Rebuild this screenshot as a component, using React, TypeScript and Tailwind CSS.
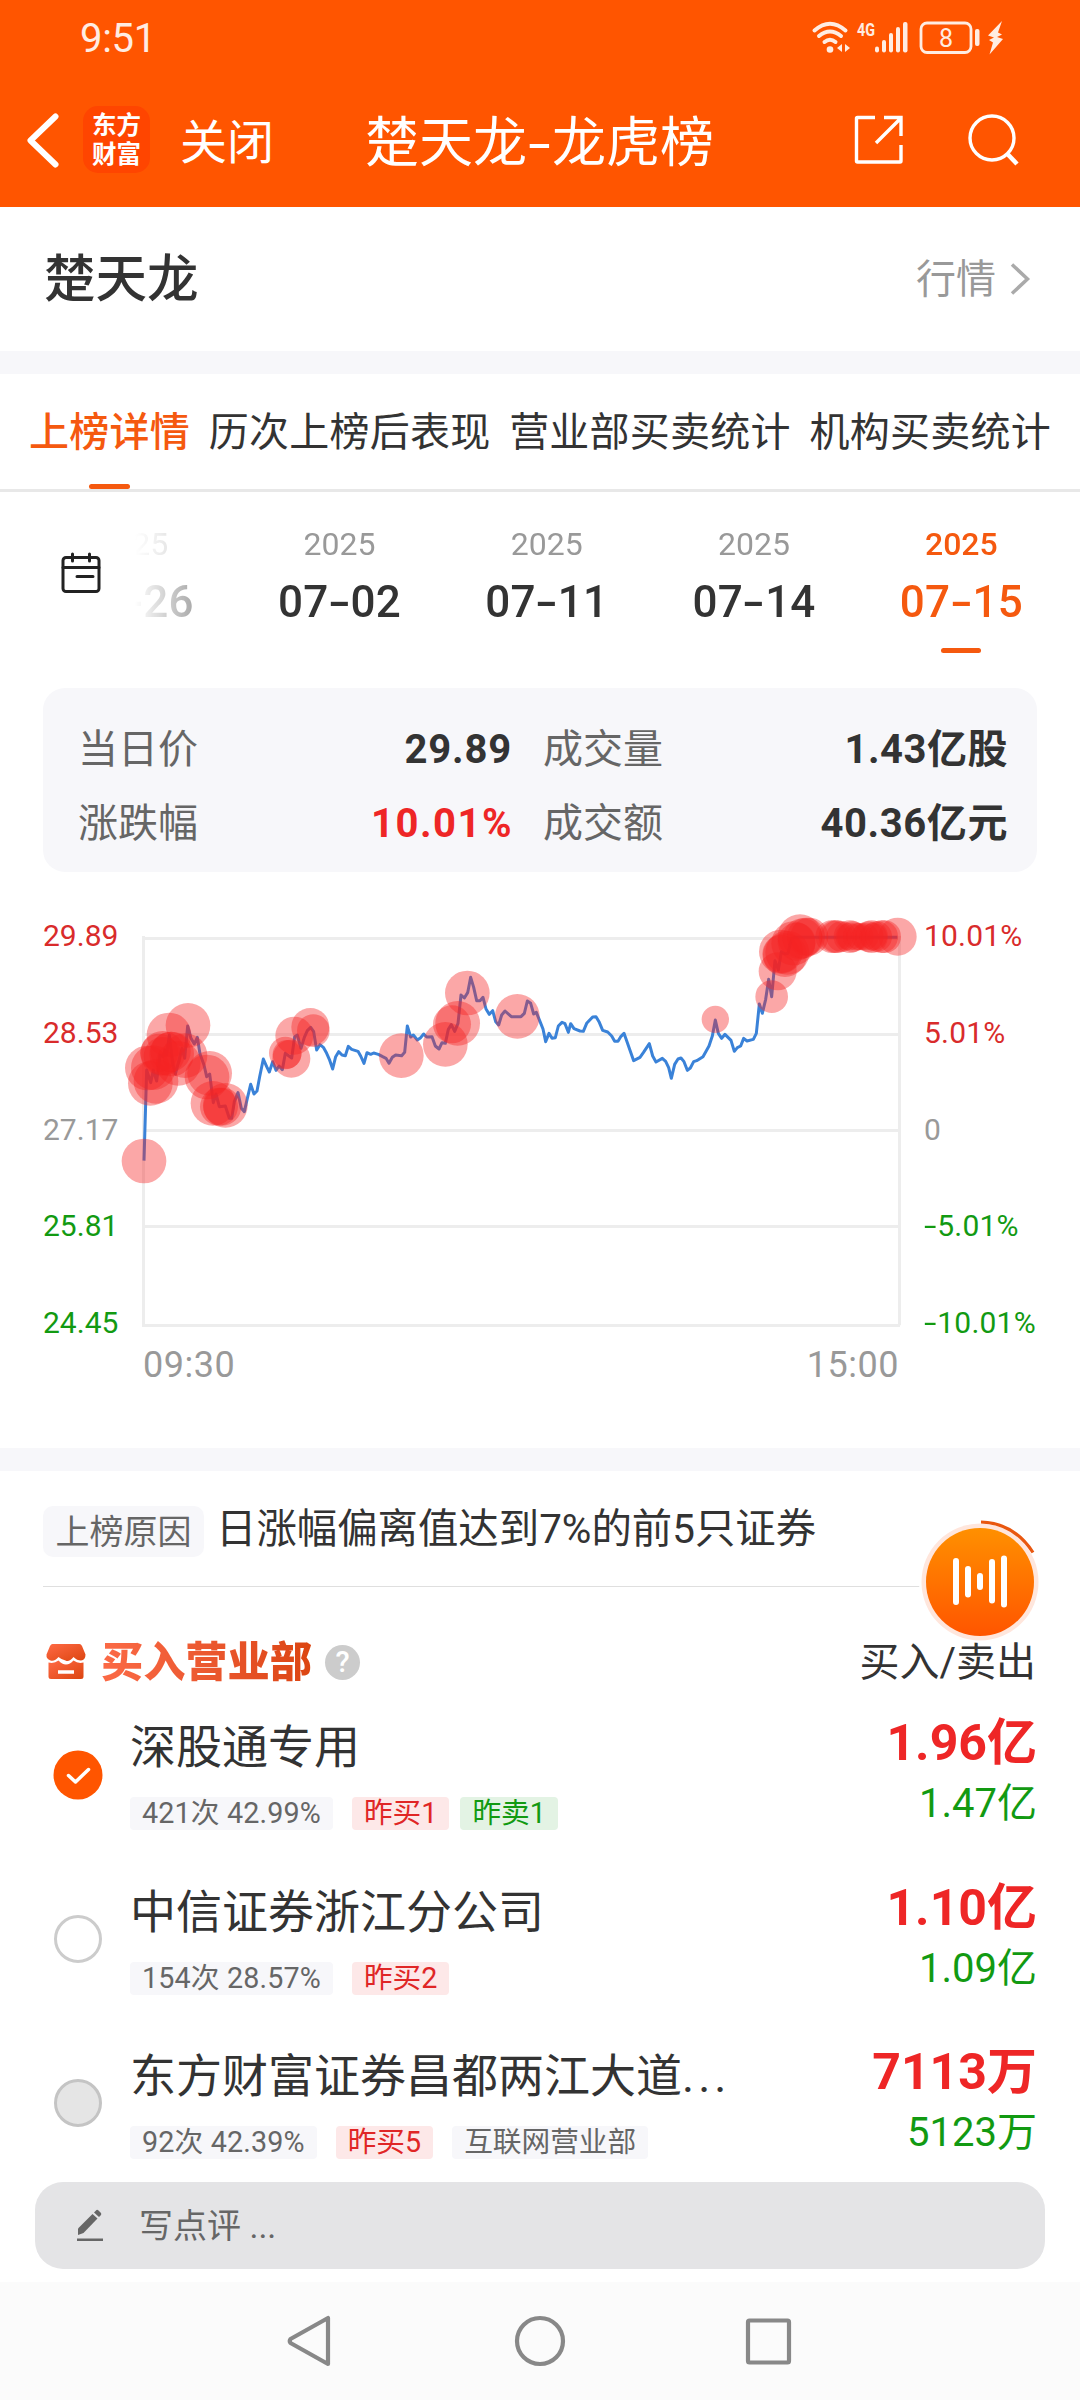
import React from "react";

interface Tag {
    text: string;
    tone: "gray" | "red" | "green";
}

interface Seat {
    name: string;
    more?: boolean;
    state: "checked" | "empty" | "disabled";
    buy: string;
    sell: string;
    tags: Tag[];
}

const tabs = ["上榜详情", "历次上榜后表现", "营业部买卖统计", "机构买卖统计"];

const dates = [
    { year: "2025", day: "07-02" },
    { year: "2025", day: "07-11" },
    { year: "2025", day: "07-14" },
    { year: "2025", day: "07-15", active: true },
];

const priceTicks = [
    { price: "29.89", rate: "10.01%", color: "text-[#d92b2b]" },
    { price: "28.53", rate: "5.01%", color: "text-[#d92b2b]" },
    { price: "27.17", rate: "0", color: "text-[#999999]" },
    { price: "25.81", rate: "-5.01%", color: "text-[#129a12]" },
    { price: "24.45", rate: "-10.01%", color: "text-[#129a12]" },
];

const seats: Seat[] = [
    {
        name: "深股通专用",
        state: "checked",
        buy: "1.96亿",
        sell: "1.47亿",
        tags: [
            { text: "421次 42.99%", tone: "gray" },
            { text: "昨买1", tone: "red" },
            { text: "昨卖1", tone: "green" },
        ],
    },
    {
        name: "中信证券浙江分公司",
        state: "empty",
        buy: "1.10亿",
        sell: "1.09亿",
        tags: [
            { text: "154次 28.57%", tone: "gray" },
            { text: "昨买2", tone: "red" },
        ],
    },
    {
        name: "东方财富证券昌都两江大道",
        more: true,
        state: "disabled",
        buy: "7113万",
        sell: "5123万",
        tags: [
            { text: "92次 42.39%", tone: "gray" },
            { text: "昨买5", tone: "red" },
            { text: "互联网营业部", tone: "gray" },
        ],
    },
];

const toneClass = {
    gray: "bg-[#f7f7fa] text-[#666666]",
    red: "bg-[#fde8e8] text-[#e02626]",
    green: "bg-[#e3f3e4] text-[#129a12]",
};

// Intraday price, three units per pixel
const pricePoints =
    "102,782 110,510 122,548 130,510 140,543 150,465 160,470 165,450 170,465 178,405 188,490 196,522 206,485 216,445 224,475 233,378 243,415 253,432 262,412 270,462 282,495 290,530 299,522 310,608 318,582 328,620 346,618 358,655 365,655 373,605 384,578 394,625 403,635 412,595 422,553 432,582 441,573 449,530 460,477 470,500 478,516 488,485 498,511 507,498 517,509 526,460 545,474 554,410 562,405 573,445 583,412 592,392 602,382 611,395 620,450 630,434 640,442 650,460 658,478 668,507 677,470 686,455 696,465 706,467 715,439 725,448 744,454 752,468 762,490 771,458 782,463 791,459 805,463 818,470 828,475 837,490 847,472 857,465 875,467 884,457 892,378 902,411 910,405 922,420 932,413 941,402 950,411 966,410 976,438 987,447 996,428 1006,430 1015,388 1024,374 1034,394 1044,370 1053,285 1063,294 1073,278 1082,232 1091,262 1100,302 1110,302 1119,292 1128,327 1138,343 1148,332 1157,365 1166,375 1175,345 1185,333 1204,350 1233,350 1243,340 1252,303 1262,310 1271,342 1279,337 1289,362 1299,387 1307,425 1317,400 1326,415 1336,413 1345,378 1356,367 1365,371 1375,397 1382,371 1392,386 1410,393 1420,394 1430,370 1448,351 1458,350 1467,365 1478,391 1493,396 1505,408 1514,424 1524,424 1533,409 1542,400 1551,425 1571,482 1590,472 1600,458 1618,431 1628,468 1638,486 1657,475 1667,484 1676,503 1684,535 1694,493 1704,477 1713,474 1722,485 1732,511 1741,504 1751,485 1760,482 1779,470 1797,438 1807,408 1816,360 1825,400 1835,415 1845,403 1863,421 1873,454 1882,443 1892,438 1901,415 1911,423 1930,418 1939,400 1948,312 1957,340 1967,298 1976,238 1985,290 1995,182 2005,210 2014,155 2024,162 2034,160 2045,115 2055,112 2362,112";

// [cx, cy, r]
const tradeDots = [
    [102, 783, 67], [112, 504, 67], [121, 550, 67], [138, 544, 67], [130, 503, 67],
    [177, 405, 67], [234, 376, 67], [158, 460, 67], [158, 468, 57], [185, 462, 67],
    [148, 458, 57], [205, 490, 67], [225, 467, 67], [182, 455, 60],
    [299, 520, 67], [291, 531, 67], [309, 610, 67], [327, 620, 57], [337, 620, 57], [346, 616, 67],
    [553, 407, 57], [601, 381, 57], [610, 392, 49], [526, 459, 49], [544, 476, 57], [531, 463, 43],
    [874, 467, 67], [1006, 433, 67], [1026, 373, 57], [1043, 370, 67], [1072, 279, 67], [1222, 349, 67],
    [1816, 358, 41], [1985, 290, 49], [2003, 214, 57], [2013, 155, 66], [2014, 162, 57],
    [2025, 165, 66], [2032, 158, 66], [2050, 130, 66], [2060, 125, 57], [2070, 110, 67],
    [2078, 115, 60], [2088, 110, 57], [2098, 110, 57], [2165, 110, 49], [2175, 110, 49],
    [2182, 110, 49], [2195, 110, 46], [2220, 110, 49], [2218, 110, 41], [2228, 110, 46],
    [2240, 110, 41], [2250, 110, 41], [2265, 110, 41], [2275, 110, 46],
    [2285, 110, 49], [2290, 110, 41], [2300, 110, 46], [2315, 110, 49], [2324, 110, 49], [2363, 110, 57],
];

// Number text whose minus sign or dash is drawn wider than the font's hyphen
function Dashed({ text }: { text: string }) {
    const parts = text.split("-");
    return (
        <>
            {parts.map((part, i) => (
                <React.Fragment key={i}>
                    {i > 0 && <span className="mx-[0.08em] inline-block scale-x-150">-</span>}
                    {part}
                </React.Fragment>
            ))}
        </>
    );
}

function StatusBar() {
    return (
        <div className="flex h-[76px] items-center justify-between pl-[80px] pr-[76px] text-[#ffece2]">
            <span className="mt-[1px] text-[40px] leading-none tracking-[-0.3px]">9:51</span>
            <svg className="overflow-visible" width="192" height="34" viewBox="812 20 192 34" fill="currentColor">
                <g fill="none" stroke="currentColor" strokeWidth="4" strokeLinecap="round">
                    <path d="M814.500 29.500Q830 16 845.500 29.500" />
                    <path d="M819 35Q830 26 841 35" />
                    <path d="M824.500 41Q830 36.500 835.500 41" />
                </g>
                <circle cx="830" cy="48.500" r="3.300" />
                <path d="M842 43v8l-5-4zM845 43v8l5-4z" />
                <text x="857" y="35" fontSize="19" fontWeight="700" textLength="18" lengthAdjust="spacingAndGlyphs">4G</text>
                <rect x="875" y="45.500" width="4" height="6" rx="2" />
                <rect x="882" y="39" width="4" height="12.500" rx="2" />
                <rect x="889" y="32" width="4" height="19.500" rx="2" />
                <rect x="896" y="26" width="4" height="25.500" rx="2" />
                <rect x="903" y="21" width="4.500" height="30.500" rx="2" />
                <rect x="921" y="22" width="50" height="29.500" rx="6" fill="none" stroke="currentColor" strokeWidth="2.800" />
                <text x="946" y="45.500" fontSize="25" textAnchor="middle">8</text>
                <rect x="975" y="28" width="4.500" height="17" rx="2" />
                <path d="M1002 20l-14 14.500 6 2-5 2.500 4 2.500-3.500 12L1003 38l-6-2 5-2.500-4-2z" />
            </svg>
        </div>
    );
}

function NavBar() {
    return (
        <div className="flex h-[131px] items-center pb-[4px] pl-[26px] pr-[61px] text-white">
            <svg width="34" height="56" viewBox="0 0 34 56" fill="none" stroke="currentColor" strokeWidth="6" strokeLinecap="round" strokeLinejoin="round">
                <path d="M29.500 4.500L4.500 28.500 29.500 52.500" />
            </svg>
            <div className="ml-[23px] flex h-[67px] w-[67px] flex-col items-center justify-center rounded-[15px] bg-[#ff4500] text-[24.5px] font-bold leading-[29px]">
                <span>东方</span>
                <span>财富</span>
            </div>
            <span className="ml-[30px] mt-[5px] text-[47px] leading-none">关闭</span>
            <span className="ml-[91px] mt-[8px] flex text-[54px] leading-none">
                <span>楚天龙</span>
                <span className="w-[25px] scale-x-150 text-center">-</span>
                <span>龙虎榜</span>
            </span>
            <svg className="ml-auto" width="50" height="50" viewBox="0 0 50 50" fill="none" stroke="currentColor" strokeWidth="3.400">
                <path d="M21 2.500H3.500Q2.500 2.500 2.500 3.500V46Q2.500 47 3.500 47H46Q47 47 47 46V30" />
                <path d="M30 2.500H47V21M47 3L22 28" />
            </svg>
            <svg className="ml-[63px]" width="52" height="54" viewBox="0 0 52 54" fill="none" stroke="currentColor" strokeWidth="3.400">
                <circle cx="25" cy="25" r="22" />
                <path d="M40 40.500L50 51" strokeWidth="4.500" />
            </svg>
        </div>
    );
}

function DateItem({ year, day, active }: { year: string; day: string; active?: boolean }) {
    return (
        <div className={`flex w-[207.3px] shrink-0 flex-col items-center ${active ? "text-[#f5590f]" : ""}`}>
            <span className={`text-[32px] leading-[40px] ${active ? "font-medium" : "text-[#999999]"}`}>{year}</span>
            <span className={`mt-[13px] text-[44px] font-medium leading-[50px] tracking-[0.2px] ${active ? "" : "text-[#333333]"}`}>
                <Dashed text={day} />
            </span>
            {active && <span className="mt-[21px] h-[5px] w-[40px] rounded-full bg-[#f5590f]" />}
        </div>
    );
}

function DatePicker() {
    return (
        <div className="flex h-[196px] items-start">
            <svg className="ml-[60px] mt-[60px] shrink-0" width="42" height="42" viewBox="0 0 42 42" fill="none" stroke="#222222" strokeWidth="3" strokeLinecap="round">
                <rect x="3" y="5.500" width="36" height="34" rx="3" />
                <path d="M3 15.500H39M17 24.500H33M12.500 2V9M29.500 2V9" />
            </svg>
            <div className="ml-[33px] mt-[32px] flex w-[945px] justify-end overflow-hidden [mask-image:linear-gradient(to_right,transparent,black_140px)]">
                <DateItem year="2025" day="06-26" />
                {dates.map((d) => (
                    <DateItem key={d.day} {...d} />
                ))}
                <span className="w-[15px] shrink-0" />
            </div>
        </div>
    );
}

function Summary() {
    return (
        <div className="mx-[43px] grid h-[184px] grid-cols-[433px_464px] content-center gap-x-[32px] gap-y-[24px] rounded-[22px] bg-[#f7f7fa] pl-[35px] pt-[13px] text-[40px] leading-[50px] text-[#666666]">
            <div className="flex justify-between">
                <span>当日价</span>
                <span className="-mr-[1px] font-bold tracking-[0.8px] text-[#333333]">29.89</span>
            </div>
            <div className="flex justify-between">
                <span>成交量</span>
                <span className="-mr-[1px] font-bold tracking-[0.5px] text-[#333333]">1.43亿股</span>
            </div>
            <div className="flex justify-between">
                <span>涨跌幅</span>
                <span className="-mr-[2px] font-bold tracking-[1.5px] text-[#ee2626]">10.01%</span>
            </div>
            <div className="flex justify-between">
                <span>成交额</span>
                <span className="-mr-[1px] font-bold tracking-[0.6px] text-[#333333]">40.36亿元</span>
            </div>
        </div>
    );
}

function PriceChart() {
    return (
        <div className="mt-[44px] h-[532px] pt-[22px]">
            <div className="flex h-[388px]">
                <div className="-mb-[17px] -mt-[22px] flex w-[100px] flex-col justify-between pl-[43px] text-[30px] leading-[40px]">
                    {priceTicks.map((t) => (
                        <span key={t.price} className={t.color}>{t.price}</span>
                    ))}
                </div>
                <svg className="ml-[43px] overflow-visible" width="757" height="388" viewBox="99 114 2271 1164" fill="none">
                    <g stroke="#ededed" strokeWidth="9">
                        <path d="M100 115.500H2370M100 403.500H2370M100 691.500H2370M100 979.500H2370M96 1276.500H2370" />
                        <path d="M100.500 108V1276M2368.500 108V1276" />
                    </g>
                    <polyline points={pricePoints} stroke="#3a82d8" strokeWidth="9" strokeLinejoin="round" />
                    <g fill="#f42323" fillOpacity="0.4">
                        {tradeDots.map(([cx, cy, r], i) => (
                            <circle key={i} cx={cx} cy={cy} r={r} />
                        ))}
                    </g>
                </svg>
                <div className="-mb-[17px] -mt-[22px] ml-[24px] flex flex-col justify-between text-[30px] leading-[40px] tracking-[0.2px]">
                    {priceTicks.map((t) => (
                        <span key={t.rate} className={t.color}>
                            <Dashed text={t.rate} />
                        </span>
                    ))}
                </div>
            </div>
            <div className="ml-[143px] mt-[18px] flex w-[756px] justify-between text-[36px] leading-[42px] tracking-[0.5px] text-[#999999]">
                <span>09:30</span>
                <span>15:00</span>
            </div>
        </div>
    );
}

function AudioButton() {
    return (
        <div className="absolute left-[914px] top-[48px] h-[130px] w-[130px]">
            <svg width="130" height="130" viewBox="0 0 130 130">
                <defs>
                    <linearGradient id="audio" x1="0" y1="0" x2="0" y2="1">
                        <stop offset="0" stopColor="#ff9000" />
                        <stop offset="1" stopColor="#ff5500" />
                    </linearGradient>
                </defs>
                <circle cx="66" cy="63" r="61" fill="#ffffff" />
                <circle cx="66" cy="63" r="58.500" fill="#ffe6dc" />
                <circle cx="66" cy="63" r="54" fill="url(#audio)" />
                <path d="M67 3Q100 4 119 33.500" fill="none" stroke="#e9570f" strokeWidth="3.200" />
                <g stroke="#ffffff" strokeWidth="6" strokeLinecap="round">
                    <path d="M42 42V83M54 50V75.500M66 57V68M78 43V81.500M90 39.500V85.500" />
                </g>
            </svg>
        </div>
    );
}

function Radio({ state }: { state: Seat["state"] }) {
    if (state === "checked") {
        return (
            <svg width="50" height="50" viewBox="0 0 50 50" fill="none">
                <circle cx="25" cy="25" r="24.500" fill="#ff5500" />
                <path d="M15.500 25.500L22.500 32 35.500 19.500" stroke="#ffffff" strokeWidth="3.500" strokeLinecap="round" strokeLinejoin="round" />
            </svg>
        );
    }
    return (
        <span
            className={`h-[48px] w-[48px] rounded-full border-[3px] ${
                state === "disabled" ? "border-[#c4c4c4] bg-[#e5e5e5]" : "border-[#cccccc]"
            }`}
        />
    );
}

function SeatRow({ seat }: { seat: Seat }) {
    return (
        <div className="flex h-[164.5px] pr-[43px]">
            <div className="flex w-[130px] justify-center pl-[26px] pt-[25px]">
                <Radio state={seat.state} />
            </div>
            <div className="flex-1">
                <div className="mt-[-6px] text-[46px] leading-[56px] text-[#333333]">
                    {seat.name}
                    {seat.more && <span className="tracking-[4px]">...</span>}
                </div>
                <div className="mt-[22px] flex text-[28.7px] leading-[33px]">
                    {seat.tags.map((tag, i) => (
                        <span
                            key={tag.text}
                            className={`h-[33px] rounded-[4px] px-[12px] whitespace-nowrap ${toneClass[tag.tone]} ${
                                i === 0 ? "tracking-[0.15px]" : tag.tone === "green" ? "ml-[11px]" : "ml-[19px]"
                            }`}
                        >
                            {tag.text}
                        </span>
                    ))}
                </div>
            </div>
            <div className="-mt-[12px] flex flex-col items-end">
                <span className="text-[50px] font-bold leading-[60px] text-[#ee2626]">{seat.buy}</span>
                <span className="mt-[4px] text-[40px] leading-[54px] text-[#129a12]">{seat.sell}</span>
            </div>
        </div>
    );
}

export default function App() {
    return (
        <div className="flex h-[2400px] w-[1080px] flex-col overflow-hidden bg-white font-[Roboto,'Noto_Sans_CJK_SC',sans-serif]">
            {/* Header */}
            <div className="h-[207px] shrink-0 bg-[#ff5500]">
                <StatusBar />
                <NavBar />
            </div>

            {/* Stock name */}
            <div className="flex h-[144px] shrink-0 items-center px-[44px]">
                <h1 className="mt-[1px] text-[51.5px] font-medium leading-none text-[#333333]">楚天龙</h1>
                <span className="ml-auto mt-[2px] text-[40px] leading-none text-[#999999]">行情</span>
                <svg className="ml-[13px] mr-[5px]" width="22" height="34" viewBox="0 0 22 34" fill="none" stroke="#aaaaaa" strokeWidth="3.500">
                    <path d="M3 2.500L18.500 17 3 31.500" />
                </svg>
            </div>
            <div className="h-[23px] shrink-0 bg-[#f7f7fa]" />

            {/* Tabs */}
            <div className="flex h-[118px] shrink-0 gap-[18.7px] border-b-[3px] border-[#e8e8e8] pl-[29px] text-[40px] tracking-[0.25px] text-[#333333]">
                {tabs.map((tab, i) => (
                    <div key={tab} className={`flex flex-col items-center whitespace-nowrap pt-[34px] ${i === 0 ? "font-medium text-[#f5590f]" : ""}`}>
                        <span className="leading-[50px]">{tab}</span>
                        {i === 0 && <span className="mt-[26px] h-[5px] w-[41px] rounded-full bg-[#f5590f]" />}
                    </div>
                ))}
            </div>

            <DatePicker />
            <Summary />
            <PriceChart />
            <div className="h-[23px] shrink-0 bg-[#f7f7fa]" />

            {/* Reason */}
            <div className="relative h-[116px] shrink-0 px-[43px]">
                <div className="flex h-[116px] items-start border-b border-[#dfdfdf] pt-[35px]">
                    <span className="h-[51px] w-[161px] rounded-[10px] bg-[#f7f7fa] text-center text-[34px] leading-[52px] text-[#666666]">上榜原因</span>
                    <span className="ml-[12px] mt-[-2px] text-[40.4px] leading-[52px] text-[#333333]">日涨幅偏离值达到7%的前5只证券</span>
                </div>
                <AudioButton />
            </div>

            {/* Buying branches */}
            <div className="flex h-[138px] shrink-0 items-center pl-[46px] pr-[44px] pt-[13px]">
                <svg className="-mt-[2px]" width="40" height="38" viewBox="0 0 40 38">
                    <defs>
                        <linearGradient id="shop" x1="0" y1="0" x2="1" y2="1">
                            <stop offset="0" stopColor="#ff6a45" />
                            <stop offset="1" stopColor="#dc4510" />
                        </linearGradient>
                    </defs>
                    <path d="M6.500 1H33.500Q35 1 36 3L39.500 11.500Q39.500 17 35 17.500Q31 17.500 27.500 14Q23 19.500 19.500 17.500Q16 17 12.500 14Q9 18.500 4.500 17.500Q0 16 .5 11.500L4 3Q5 1 6.500 1Z" fill="url(#shop)" />
                    <path d="M2.500 19.500Q8 21 12.500 17.500Q16 21.500 20 21.500Q24 21.500 27.500 17.500Q32 21 37.500 19.500V33.500Q37.500 36 35 36H5Q2.500 36 2.500 33.500Z" fill="url(#shop)" />
                    <path d="M12 29H28" stroke="#ffffff" strokeWidth="3.500" />
                </svg>
                <span className="ml-[15px] bg-linear-to-r from-[#fb6a46] to-[#dc4510] bg-clip-text text-[42.2px] font-black leading-[50px] text-transparent">买入营业部</span>
                <span className="ml-[13px] flex h-[35px] w-[35px] items-center justify-center rounded-full bg-[#cccccc] text-[29px] font-medium leading-none text-white">?</span>
                <span className="ml-auto mt-[1px] text-[40px] leading-none text-[#333333]">买入/卖出</span>
            </div>
            <div className="h-[457px] shrink-0">
                {seats.map((seat) => (
                    <SeatRow key={seat.name} seat={seat} />
                ))}
            </div>

            {/* Comment box */}
            <div className="mx-[35px] flex h-[87px] shrink-0 items-center rounded-[28px] bg-[#e4e4e6] pl-[41px] text-[34px] text-[#666666]">
                <svg width="28" height="34" viewBox="0 0 28 34" fill="currentColor">
                    <path d="M2 26V19.500L16.500 5 21.500 9.500 7.500 24Z" />
                    <path d="M18 3.500L20.500 1Q21.500 .5 22.500 1.500L25 4Q25.500 5 25 6L23 8Z" />
                    <path d="M1 29.500H27V32H1Z" />
                </svg>
                <span className="ml-[35px] leading-none">写点评 ...</span>
            </div>

            {/* System navigation */}
            <div className="mt-auto flex h-[118px] shrink-0 items-center justify-center bg-[#fbfbfb] pr-[2px]">
                <svg width="506" height="54" viewBox="286 2314 506 54" fill="none" stroke="#888888" strokeWidth="4.200" strokeLinejoin="round">
                    <path d="M328 2318V2364L290.500 2343Q289 2341 290.500 2339Z" />
                    <circle cx="540" cy="2341" r="23" />
                    <rect x="748" y="2320.500" width="41" height="42" rx="1.500" />
                </svg>
            </div>
        </div>
    );
}
